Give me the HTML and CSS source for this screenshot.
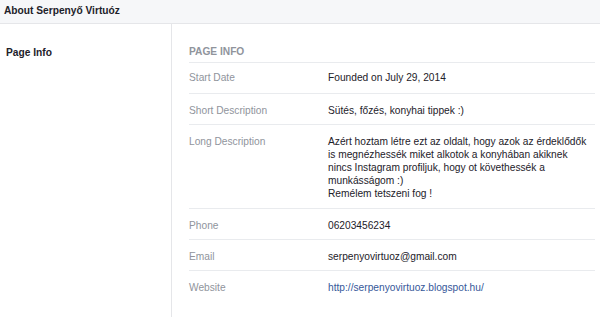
FILE: index.html
```html
<!DOCTYPE html>
<html>
<head>
<meta charset="utf-8">
<link rel="stylesheet" href="styles.css">
</head>
<body>
<div class="header">About Serpenyő Virtuóz</div>
<div class="main">
  <div class="side"><div class="side-item">Page Info</div></div>
  <div class="content">
    <div class="section-title">PAGE INFO</div>
    <div class="row first"><div class="label">Start Date</div><div class="value">Founded on July 29, 2014</div></div>
    <div class="row"><div class="label">Short Description</div><div class="value">Sütés, főzés, konyhai tippek :)</div></div>
    <div class="row long"><div class="label">Long Description</div><div class="value">Azért hoztam létre ezt az oldalt, hogy azok az érdeklődők<br>is megnézhessék miket alkotok a konyhában akiknek<br>nincs Instagram profiljuk, hogy ot követhessék a<br>munkásságom :)<br>Remélem tetszeni fog !</div></div>
    <div class="row"><div class="label">Phone</div><div class="value">06203456234</div></div>
    <div class="row"><div class="label">Email</div><div class="value">serpenyovirtuoz@gmail.com</div></div>
    <div class="row last"><div class="label">Website</div><div class="value"><a class="link" href="#">http://serpenyovirtuoz.blogspot.hu/</a></div></div>
  </div>
</div>
</body>
</html>
```
FILE: styles.css
```css
html, body {
  margin: 0;
  padding: 0;
  background: #fff;
  font-family: "Liberation Sans", Arial, sans-serif;
  font-size: 10.2px;
  color: #1d2129;
}
.header {
  height: 24px;
  box-sizing: border-box;
  background: #f6f7f9;
  border-bottom: 1px solid #e5e6e9;
  font-weight: bold;
  font-size: 10.2px;
  line-height: 22px;
  padding-left: 4px;
  color: #1d2129;
}
.main {
  display: flex;
  height: 293px;
}
.side {
  width: 172px;
  flex: none;
  border-right: 1px solid #e5e6e9;
  padding-top: 22px;
  box-sizing: border-box;
}
.side-item {
  font-weight: bold;
  padding-left: 6px;
  line-height: 14px;
}
.content {
  flex: 1;
  padding: 21px 5px 0 17px;
}
.section-title {
  color: #90949c;
  font-weight: bold;
  line-height: 14px;
  padding-bottom: 3px;
  border-bottom: 1px solid #e9ebee;
}
.row {
  display: flex;
  padding: 10px 0 7px;
  line-height: 13px;
  border-bottom: 1px solid #e9ebee;
}
.row.first {
  padding: 8px 0 9px;
}
.row.long {
  padding-bottom: 8px;
}
.row.last {
  border-bottom: none;
}
.label {
  width: 139px;
  flex: none;
  color: #90949c;
}
.value {
  flex: 1;
  white-space: nowrap;
  color: #1d2129;
}
.link {
  color: #365899;
  text-decoration: none;
}
```
